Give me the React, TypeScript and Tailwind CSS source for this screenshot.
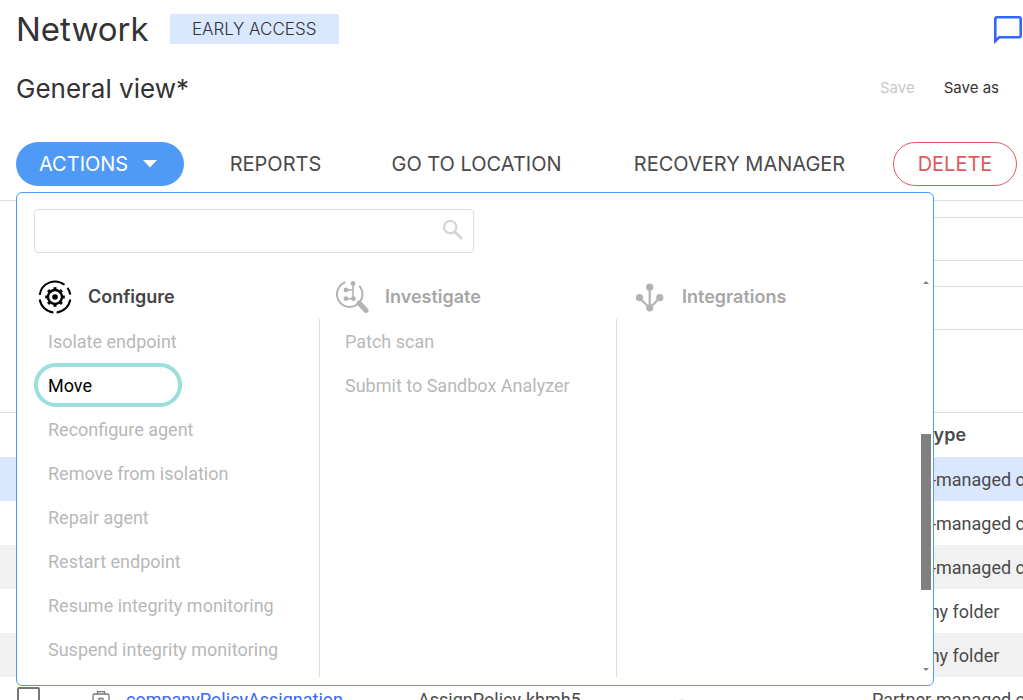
import React, { useState } from 'react';
import clsx from 'clsx';

type Row = {
  id: number;
  name?: string;
  policy?: string;
  label?: string;
  type: string;
  selected?: boolean;
};

const rows: Row[] = [
  { id: 1, type: 'Partner-managed company', selected: true },
  { id: 2, type: 'Partner-managed company' },
  { id: 3, type: 'Partner-managed company' },
  { id: 4, type: 'Company folder' },
  { id: 5, type: 'Company folder' },
  {
    id: 6,
    name: 'companyPolicyAssignation',
    policy: 'AssignPolicy-khmh5',
    label: '-',
    type: 'Partner-managed company',
  },
];

const configureItems = [
  'Isolate endpoint',
  'Move',
  'Reconfigure agent',
  'Remove from isolation',
  'Repair agent',
  'Restart endpoint',
  'Resume integrity monitoring',
  'Suspend integrity monitoring',
];

const investigateItems = ['Patch scan', 'Submit to Sandbox Analyzer'];

function ConfigureIcon() {
  return (
    <svg width="34" height="34" viewBox="0 0 34 34" fill="none" stroke="#000" strokeWidth="2">
      <path d="M1.7 14.8A15.5 15.5 0 0 1 26.5 4.8" />
      <path d="M29.5 7.9A15.5 15.5 0 0 1 32.3 14.6" />
      <path d="M32.3 19.5A15.5 15.5 0 0 1 18.6 32.4" />
      <path d="M15.4 32.4A15.5 15.5 0 0 1 1.7 19.5" />
      <circle cx="17" cy="17" r="7" strokeWidth="2.4" />
      {[0, 45, 90, 135, 180, 225, 270, 315].map((angle) => (
        <path key={angle} d="M17 7.2V10" strokeWidth="3" transform={`rotate(${angle} 17 17)`} />
      ))}
      <circle cx="17" cy="17" r="2.8" fill="#000" stroke="none" />
    </svg>
  );
}

function InvestigateIcon() {
  return (
    <svg width="34" height="34" viewBox="0 0 34 34" fill="none" stroke="#b3b3b3" strokeWidth="2">
      <path d="M10.3 2.3A12.7 12.7 0 1 0 24.3 5.9" />
      <path d="M11 10H18M18 3.7V18.7H11" strokeWidth="1.6" />
      <path d="M24 23L31 30.5" strokeWidth="5" strokeLinecap="round" />
      <g fill="#b3b3b3" stroke="none">
        <circle cx="18" cy="3.4" r="2.4" />
        <circle cx="11" cy="10" r="2.4" />
        <circle cx="11" cy="18.7" r="2.4" />
        <circle cx="18.4" cy="18.7" r="2.4" />
      </g>
    </svg>
  );
}

function IntegrationsIcon() {
  return (
    <svg width="34" height="34" viewBox="0 0 34 34" fill="none" stroke="#b3b3b3" strokeWidth="2.2">
      <path d="M17.7 7V28M7.3 17.7L17.7 28L28 17.7" />
      <g fill="#b3b3b3" stroke="none">
        <circle cx="17.7" cy="7.2" r="3.6" />
        <circle cx="7.5" cy="17.7" r="3.6" />
        <circle cx="27.8" cy="17.7" r="3.6" />
        <circle cx="17.7" cy="27.8" r="3.6" />
      </g>
    </svg>
  );
}

function BriefcaseIcon() {
  return (
    <svg width="18" height="18" viewBox="0 0 18 18" fill="none" stroke="#777" strokeWidth="1.3">
      <rect x="1" y="4" width="16" height="12" rx="1.5" />
      <path d="M5.5 4V1.7H12.5V4" />
      <path d="M1 11H7M11 11H17M7 8.5H11V12.5H7Z" />
    </svg>
  );
}

function ActionColumn({
  title,
  icon,
  items,
  active,
  divider = true,
}: {
  title: string;
  icon: React.ReactNode;
  items: string[];
  active?: string;
  divider?: boolean;
}) {
  return (
    <section className="flex flex-1 flex-col">
      <h3
        className={clsx(
          'flex h-11 shrink-0 items-center gap-4 pl-[15px] font-[Inter,sans-serif] text-lg font-semibold',
          active ? 'text-[#444]' : 'text-[#a6a6a6]',
        )}
      >
        {icon}
        {title}
      </h3>
      <ul className={clsx('flex-1', divider && 'border-r border-[#ddd]')}>
        {items.map((item) => (
          <li key={item} className="h-11 pl-[11px]">
            <button
              type="button"
              disabled={item !== active}
              className={clsx(
                'h-11 pt-0.5 text-left text-lg',
                item === active
                  ? 'w-[148px] rounded-full border-4 border-[#9adfdc] pl-[10px] text-black'
                  : 'pl-[14px] text-[#b8b8b8]',
              )}
            >
              {item}
            </button>
          </li>
        ))}
      </ul>
    </section>
  );
}

function ActionsMenu() {
  const [query, setQuery] = useState('');
  const match = (items: string[]) =>
    items.filter((item) => item.toLowerCase().includes(query.toLowerCase()));

  return (
    <div className="absolute top-[50px] left-0 z-10 w-[918px] rounded-md border border-[#4f9af6] bg-white pb-2 font-[Roboto,sans-serif]">
      <div className="relative mt-4 ml-[17px] w-[440px]">
        <input
          type="text"
          aria-label="Search actions"
          value={query}
          onChange={(e) => setQuery(e.target.value)}
          className="block h-11 w-full rounded border border-[#ddd] pr-10 pl-3 outline-none"
        />
        <svg
          className="absolute top-2.5 right-2.5"
          width="22"
          height="22"
          viewBox="0 0 22 22"
          fill="none"
          stroke="#d4d4d4"
          strokeWidth="2.2"
        >
          <circle cx="8.2" cy="8.2" r="6.2" />
          <path d="M12.7 12.7L20 20" strokeWidth="2.8" />
        </svg>
      </div>

      <div className="mt-[22px] flex h-[402px] pr-0.5 pl-1.5">
        <ActionColumn
          title="Configure"
          icon={<ConfigureIcon />}
          items={match(configureItems)}
          active="Move"
        />
        <ActionColumn
          title="Investigate"
          icon={<InvestigateIcon />}
          items={match(investigateItems)}
        />
        <ActionColumn title="Integrations" icon={<IntegrationsIcon />} items={[]} divider={false} />
        <div className="ml-[7px] flex w-2.5 flex-col items-center justify-between pt-1.5 pb-1.5">
          <svg width="6" height="3" viewBox="0 0 6 3">
            <path d="M0 3L3 0L6 3Z" fill="#808080" />
          </svg>
          <div className="mt-[72px] h-[156px] w-full bg-[#808080]" />
          <svg width="6" height="3" viewBox="0 0 6 3">
            <path d="M0 0L3 3L6 0Z" fill="#808080" />
          </svg>
        </div>
      </div>
    </div>
  );
}

export default function App() {
  const [open, setOpen] = useState(true);
  const [view, setView] = useState('');
  const [filter, setFilter] = useState('');

  return (
    <div className="h-screen overflow-hidden bg-white font-[Roboto,sans-serif] text-[#4a4a4a]">
      <header className="flex h-[58px] items-center pr-px pl-4 font-[Inter,sans-serif]">
        <h1 className="text-[33px] leading-none text-[#333]">Network</h1>
        <span className="ml-[21px] flex h-[30px] w-[169px] items-center justify-center bg-[#d9e7ff] pt-0.5 text-[17px] font-light text-[#333]">
          EARLY ACCESS
        </span>
        <button type="button" aria-label="Messages" className="ml-auto pt-0.5">
          <svg width="28" height="28" viewBox="0 0 28 28" fill="none" stroke="#3366ff" strokeWidth="2.6">
            <path d="M1.3 25V3Q1.3 1.3 3 1.3H25Q26.7 1.3 26.7 3V19.5Q26.7 21.2 25 21.2H5.2L1.3 25Z" />
          </svg>
        </button>
      </header>

      <div className="flex h-[60px] items-center pr-6 pl-4 font-[Inter,sans-serif]">
        <h2 className="text-[26px] text-[#333]">General view*</h2>
        <button type="button" disabled className="ml-auto text-[15px] text-[#c8c8c8]">
          Save
        </button>
        <button type="button" className="ml-[29px] text-[15px] text-[#333]">
          Save as
        </button>
      </div>

      <nav className="relative mt-6 ml-4 flex h-11 gap-[21px] font-[Inter,sans-serif] text-xl">
        <button
          type="button"
          aria-expanded={open}
          onClick={() => setOpen(!open)}
          className="flex w-[168px] shrink-0 items-center gap-[15px] rounded-full bg-[#4f9af6] pl-[23px] text-white"
        >
          ACTIONS
          <svg width="14" height="8" viewBox="0 0 14 8">
            <path d="M0 0H14L7 7.5Z" fill="#fff" />
          </svg>
        </button>
        <button type="button" className="w-[141px] shrink-0">
          REPORTS
        </button>
        <button type="button" className="w-[219px] shrink-0 whitespace-nowrap">
          GO TO LOCATION
        </button>
        <button type="button" className="w-[265px] shrink-0 whitespace-nowrap">
          RECOVERY MANAGER
        </button>
        <button
          type="button"
          className="w-[124px] shrink-0 rounded-full border border-[#e05a5e] text-[#e05a5e]"
        >
          DELETE
        </button>
        {open && <ActionsMenu />}
      </nav>

      <main className="mt-3.5 border-t border-[#ddd]">
        <div className="flex flex-col gap-[25px] pt-4 pb-[82px] pl-6">
          <input
            type="text"
            aria-label="View name"
            value={view}
            onChange={(e) => setView(e.target.value)}
            className="h-11 w-[1100px] rounded border border-[#ddd] px-3"
          />
          <input
            type="text"
            aria-label="Filter"
            value={filter}
            onChange={(e) => setFilter(e.target.value)}
            className="h-11 w-[1100px] rounded border border-[#ddd] px-3"
          />
        </div>

        <table className="w-[1200px] table-fixed border-t border-[#ddd] text-left text-lg whitespace-nowrap">
          <thead>
            <tr className="h-11">
              <th className="w-[92px]" />
              <th className="w-[34px]" />
              <th className="w-[292px]" />
              <th className="w-[261px]" />
              <th className="w-[193px]" />
              <th className="font-[Inter,sans-serif] font-semibold">Entity type</th>
            </tr>
          </thead>
          <tbody>
            {rows.map((row, i) => (
              <tr
                key={row.id}
                className={clsx(
                  'h-11',
                  row.selected ? 'bg-[#d9e7ff]' : i % 2 === 0 && 'bg-[#f1f1f1]',
                )}
              >
                <td className="pl-[17px]">
                  <input
                    type="checkbox"
                    aria-label={`Select row ${row.id}`}
                    defaultChecked={row.selected}
                    className="block size-[23px] appearance-none rounded-xs border-2 border-[#777]"
                  />
                </td>
                <td>{row.name && <BriefcaseIcon />}</td>
                <td className="pt-0.5">
                  {row.name && (
                    <a href="#company" className="text-[#3366ff]">
                      {row.name}
                    </a>
                  )}
                </td>
                <td className="pt-0.5">{row.policy}</td>
                <td className="pt-0.5">{row.label}</td>
                <td className="pt-0.5">{row.type}</td>
              </tr>
            ))}
          </tbody>
        </table>
      </main>
    </div>
  );
}
